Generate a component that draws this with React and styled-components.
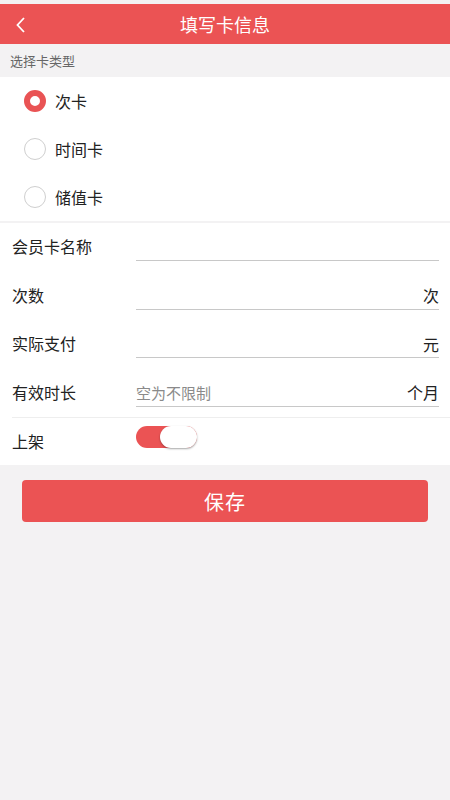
import React, { useState } from 'react'
import styled, { createGlobalStyle } from 'styled-components'

const GlobalStyle = createGlobalStyle`
  html, body {
    margin: 0;
    padding: 0;
    background: #f3f2f3;
    font-family: "Noto Sans CJK SC", "Noto Sans", sans-serif;
  }
`

const Page = styled.div`
  width: 450px;
  min-height: 800px;
  background: #f3f2f3;
  padding-top: 4px;
  box-sizing: border-box;
`

const Header = styled.div`
  height: 40px;
  background: #eb5354;
  display: flex;
  align-items: center;
  justify-content: center;
  position: relative;
  color: #fff;
  font-size: 18px;
`

const Back = styled.div`
  position: absolute;
  left: 12px;
  top: 10px;
  width: 20px;
  height: 20px;
`

const SectionLabel = styled.div`
  height: 33px;
  display: flex;
  align-items: center;
  padding-left: 10px;
  font-size: 13px;
  color: #666;
`

const Card = styled.div`
  background: #fff;
  margin-bottom: ${(p) => p.gap || 0}px;
`

const RadioRow = styled.div`
  height: 48px;
  display: flex;
  align-items: center;
  padding-left: 24px;
  font-size: 16px;
  color: #222;
  cursor: pointer;
`

const RadioDot = styled.span`
  width: 22px;
  height: 22px;
  border-radius: 50%;
  box-sizing: border-box;
  margin-right: 9px;
  border: ${(p) => (p.checked ? '6px solid #e95354' : '1px solid #cfcfcf')};
  background: #fff;
`

const FieldRow = styled.div`
  height: 48.5px;
  display: flex;
  align-items: flex-start;
  padding-left: 12px;
  box-sizing: border-box;
`

const Label = styled.div`
  width: 124px;
  height: 48px;
  display: flex;
  align-items: center;
  padding-bottom: 2px;
  box-sizing: border-box;
  font-size: 16px;
  color: #222;
`

const InputWrap = styled.div`
  width: 303px;
  height: 38px;
  padding-top: 10px;
  display: flex;
  align-items: center;
  border-bottom: 1px solid #c8c8c8;
  box-sizing: border-box;
`

const Input = styled.input`
  flex: 1;
  min-width: 0;
  border: none;
  outline: none;
  background: transparent;
  font-size: 15px;
  color: #222;
  padding: 0;
  font-family: inherit;
  &::placeholder {
    color: #8a8a8a;
  }
`

const Unit = styled.span`
  font-size: 16px;
  color: #222;
`

const SwitchRow = styled.div`
  height: 47px;
  display: flex;
  align-items: flex-start;
  padding-left: 12px;
  border-top: 1px solid #eeeeee;
  margin-left: 12px;
  padding-left: 0;
`

const Toggle = styled.div`
  margin-top: 8px;
  width: 61px;
  height: 22px;
  border-radius: 11px;
  background: #eb5354;
  position: relative;
`

const Knob = styled.span`
  position: absolute;
  right: 0;
  top: 0;
  width: 37px;
  height: 22px;
  border-radius: 11px;
  background: #fff;
  box-shadow: 0 1px 2px rgba(0, 0, 0, 0.35);
`

const SaveButton = styled.button`
  display: block;
  width: 406px;
  height: 42px;
  margin: 15px auto 0;
  border: none;
  border-radius: 4px;
  background: #eb5354;
  color: #fff;
  font-size: 20px;
  font-family: inherit;
  letter-spacing: 1px;
`

const types = ['次卡', '时间卡', '储值卡']

const fields = [
  { label: '会员卡名称', unit: '' },
  { label: '次数', unit: '次' },
  { label: '实际支付', unit: '元' },
  { label: '有效时长', unit: '个月', placeholder: '空为不限制' },
]

export default function App() {
  const [type, setType] = useState(0)

  return (
    <Page>
      <GlobalStyle />
      <Header>
        <Back>
          <svg width="20" height="20" viewBox="0 0 20 20">
            <path d="M12 3 L5.5 10 L12 17" fill="none" stroke="#fff" strokeWidth="1.8" />
          </svg>
        </Back>
        填写卡信息
      </Header>
      <SectionLabel>选择卡类型</SectionLabel>
      <Card gap={2}>
        {types.map((t, i) => (
          <RadioRow key={t} onClick={() => setType(i)}>
            <RadioDot checked={type === i} />
            {t}
          </RadioRow>
        ))}
      </Card>
      <Card>
        {fields.map((f) => (
          <FieldRow key={f.label}>
            <Label>{f.label}</Label>
            <InputWrap>
              <Input placeholder={f.placeholder || ''} />
              {f.unit && <Unit>{f.unit}</Unit>}
            </InputWrap>
          </FieldRow>
        ))}
        <SwitchRow>
          <Label>上架</Label>
          <Toggle>
            <Knob />
          </Toggle>
        </SwitchRow>
      </Card>
      <SaveButton>保存</SaveButton>
    </Page>
  )
}
